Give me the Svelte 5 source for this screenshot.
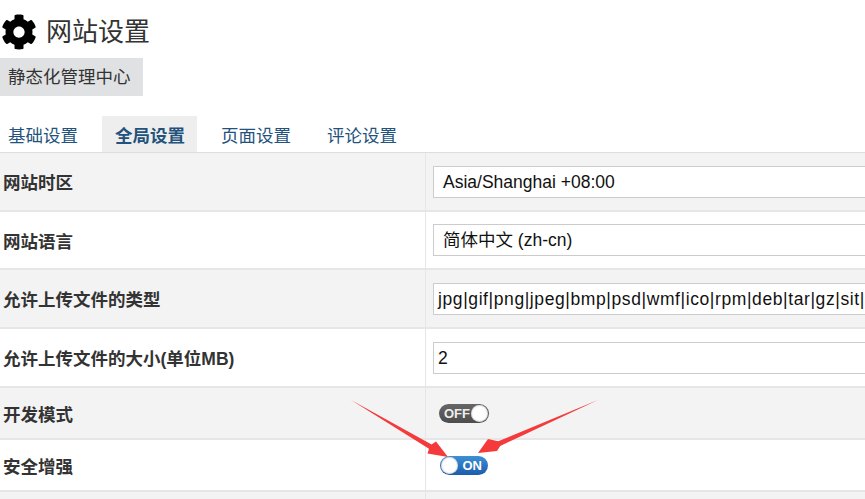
<script>
	const rows = [
		{ label: '网站时区', value: 'Asia/Shanghai +08:00', kind: 'select' },
		{ label: '网站语言', value: '简体中文 (zh-cn)', kind: 'select' },
		{ label: '允许上传文件的类型', value: 'jpg|gif|png|jpeg|bmp|psd|wmf|ico|rpm|deb|tar|gz|sit|7z|bz2|zip|rar|xml|css|doc|ppt|pdf', kind: 'input' },
		{ label: '允许上传文件的大小(单位MB)', value: '2', kind: 'input' },
		{ label: '开发模式', on: false, kind: 'switch' },
		{ label: '安全增强', on: true, kind: 'switch' },
		{ label: '', kind: 'empty' }
	];
	const tabs = ['基础设置', '全局设置', '页面设置', '评论设置'];
</script>

<div class="page">
	<h1>
		<svg class="gear" viewBox="0 0 512 512"><path d="M487.4 315.7l-42.6-24.6c4.3-23.2 4.3-47 0-70.2l42.6-24.6c4.9-2.8 7.1-8.6 5.5-14-11.1-35.6-30-67.8-54.7-94.6-3.8-4.1-10-5.1-14.8-2.3L380.8 110c-17.9-15.4-38.5-27.3-60.8-35.1V25.8c0-5.6-3.9-10.5-9.4-11.7-36.7-8.2-74.3-7.8-109.2 0-5.5 1.2-9.4 6.1-9.4 11.7V75c-22.2 7.9-42.8 19.8-60.8 35.1L88.7 85.5c-4.9-2.8-11-1.9-14.8 2.3-24.7 26.7-43.6 58.9-54.7 94.6-1.7 5.4.6 11.2 5.5 14L67.3 221c-4.3 23.2-4.3 47 0 70.2l-42.6 24.6c-4.9 2.8-7.1 8.6-5.5 14 11.1 35.6 30 67.8 54.7 94.6 3.8 4.1 10 5.1 14.8 2.3l42.6-24.6c17.9 15.4 38.5 27.3 60.8 35.1v49.2c0 5.6 3.9 10.5 9.4 11.7 36.7 8.2 74.3 7.8 109.2 0 5.5-1.2 9.4-6.1 9.4-11.7v-49.2c22.2-7.9 42.8-19.8 60.8-35.1l42.6 24.6c4.9 2.8 11 1.9 14.8-2.3 24.7-26.7 43.6-58.9 54.7-94.6 1.5-5.5-.7-11.3-5.6-14.1zM256 336c-44.1 0-80-35.9-80-80s35.9-80 80-80 80 35.9 80 80-35.9 80-80 80z"/></svg>
		<span>网站设置</span>
	</h1>
	<div class="badge">静态化管理中心</div>

	<div class="tabs">
		{#each tabs as tab, i}
			<div class="tab" class:active={i === 1}>{tab}</div>
		{/each}
	</div>

	<div class="table">
		{#each rows as row, i}
			<div class="row {row.kind}" class:odd={i % 2 === 0}>
				<div class="label">{row.label}</div>
				<div class="cell">
					{#if row.kind === 'select'}
						<div class="field select">{row.value}</div>
					{:else if row.kind === 'input'}
						<div class="field">{row.value}</div>
					{:else if row.kind === 'switch'}
						<div class="toggle" class:on={row.on}>
							{#if row.on}
								<i></i><b>ON</b>
							{:else}
								<b>OFF</b><i></i>
							{/if}
						</div>
					{/if}
				</div>
			</div>
		{/each}
	</div>

	<svg class="arrows" viewBox="0 0 865 499" width="865" height="499">
		<polygon fill="#f43a3a" points="351,400 431.6,444.4 436,441.5 448,457 427.5,453.5 429,448.8" />
		<polygon fill="#f43a3a" points="598,400 498.2,441.3 488,439 478,453 497,451 500.2,445.9" />
	</svg>
</div>

<style>
	:global(body) {
		margin: 0;
		background: #fff;
	}
	.page {
		position: relative;
		width: 865px;
		height: 499px;
		overflow: hidden;
		font-family: "Liberation Sans", "Noto Sans CJK SC", sans-serif;
		color: #333;
	}
	h1 {
		display: flex;
		align-items: center;
		gap: 9px;
		height: 58px;
		margin: 0;
		padding: 5px 0 0 1px;
		box-sizing: border-box;
		font-size: 26px;
		font-weight: 400;
		line-height: 1;
	}
	.gear {
		width: 36px;
		height: 36px;
		fill: #000;
	}
	.badge {
		width: 143px;
		height: 38px;
		padding-left: 8px;
		box-sizing: border-box;
		background: #e0e1e3;
		font-size: 17.5px;
		line-height: 38px;
	}
	.tabs {
		display: flex;
		height: 36px;
		margin-top: 20px;
	}
	.tab {
		padding: 0 12px;
		margin-right: 12px;
		color: #23527c;
		font-size: 17.5px;
		line-height: 40px;
	}
	.tab:first-child {
		padding-left: 8px;
	}
	.tab.active {
		padding-left: 13px;
		background: #eee;
		font-weight: 700;
	}
	.table {
		border-top: 1px solid #ddd;
	}
	.row {
		display: grid;
		grid-template-columns: 425px 1fr;
		height: 58px;
		box-sizing: border-box;
		border-bottom: 2px solid #e6e6e6;
		background: #fff;
	}
	.row:first-child {
		height: 59px;
	}
	.row.odd {
		background: #f3f3f3;
	}
	.row.switch {
		height: 52px;
	}
	.row.input {
		height: 59px;
	}
	.label {
		display: flex;
		align-items: center;
		padding-left: 3px;
		font-size: 17.5px;
		font-weight: 700;
	}
	.cell {
		display: flex;
		align-items: center;
		padding-left: 7px;
		border-left: 1px solid #e6e6e6;
	}
	.field {
		flex: none;
		width: 600px;
		height: 32px;
		padding-left: 4px;
		box-sizing: border-box;
		border: 1px solid #ccc;
		background: #fff;
		color: #111;
		font-size: 17.5px;
		line-height: 30px;
		letter-spacing: 0.6px;
		white-space: nowrap;
		overflow: hidden;
	}
	.field.select {
		padding-left: 9px;
		letter-spacing: 0;
	}
	.toggle {
		display: flex;
		align-items: center;
		justify-content: space-between;
		width: 50px;
		height: 19px;
		margin-left: 6px;
		padding: 0 1px 0 5px;
		box-sizing: border-box;
		border-radius: 10px;
		background: linear-gradient(#666, #4d4d4d);
		font-size: 13px;
		color: #eee;
	}
	.toggle.on {
		width: 48px;
		height: 19px;
		margin-left: 7px;
		padding: 0 6px 0 1px;
		background: linear-gradient(#3d8fd6, #1c5cab);
		color: #fff;
	}
	.toggle i {
		width: 17px;
		height: 17px;
		border-radius: 50%;
		background: #fff;
		box-shadow: inset 0 0 2px #999;
	}
	.toggle b {
		font-weight: 700;
	}
	.arrows {
		position: absolute;
		top: 0;
		left: 0;
		pointer-events: none;
	}
</style>
